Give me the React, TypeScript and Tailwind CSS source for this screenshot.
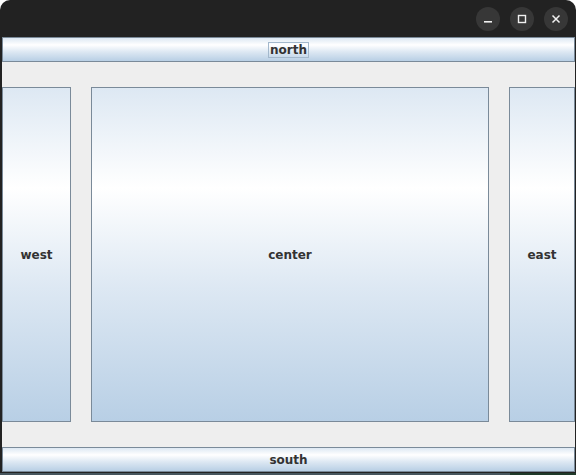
import React from "react";

// Metal "ocean" gradient used by Swing buttons
const grad =
  "bg-[linear-gradient(to_bottom,#dde8f3_0%,#ffffff_30%,#dde8f3_60%,#b8cfe5_100%)]";

function Btn({ label, focus, className }: { label: string; focus?: boolean; className?: string }) {
  return (
    <div
      className={`flex items-center justify-center border border-[#7a8a99] ${grad} text-[12px] font-bold text-[#333333] ${className ?? ""}`}
      style={{ fontFamily: '"DejaVu Sans", sans-serif' }}
    >
      <span className={focus ? "border border-[#a3b8cc] px-px leading-[14px]" : "leading-[14px]"}>{label}</span>
    </div>
  );
}

function TitleButton({ children }: { children: React.ReactNode }) {
  return (
    <div className="flex h-[24px] w-[24px] items-center justify-center rounded-full bg-[#373737]">
      {children}
    </div>
  );
}

export default function App() {
  return (
    <div className="flex h-[475px] w-[576px] flex-col bg-white">
      <div className="flex h-[473px] shrink-0 flex-col overflow-hidden rounded-t-[10px] bg-[#222222]">
        {/* title bar */}
        <div className="flex h-[37px] shrink-0 items-center justify-end gap-[10px] pr-[8px]">
          <TitleButton>
            <svg width="10" height="10" viewBox="0 0 10 10">
              <rect x="1" y="7" width="8" height="1.6" fill="#f0f0f0" />
            </svg>
          </TitleButton>
          <TitleButton>
            <svg width="10" height="10" viewBox="0 0 10 10">
              <rect x="1.5" y="1.5" width="7" height="7" fill="none" stroke="#f0f0f0" strokeWidth="1.4" />
            </svg>
          </TitleButton>
          <TitleButton>
            <svg width="10" height="10" viewBox="0 0 10 10">
              <path d="M1.5 1.5 L8.5 8.5 M8.5 1.5 L1.5 8.5" stroke="#f0f0f0" strokeWidth="1.5" />
            </svg>
          </TitleButton>
        </div>

        {/* content pane, BorderLayout */}
        <div className="ml-[2px] mr-[1px] flex h-[435px] shrink-0 flex-col bg-[#eeeeee]">
          <Btn label="north" focus className="h-[25px] shrink-0" />
          <div className="mt-[25px] flex h-[335px] shrink-0 gap-[20px]">
            <Btn label="west" className="w-[69px] shrink-0" />
            <Btn label="center" className="flex-1" />
            <Btn label="east" className="w-[66px] shrink-0" />
          </div>
          <Btn label="south" className="mt-[25px] h-[25px] shrink-0" />
        </div>
      </div>
      {/* desktop below the window */}
      <div className="flex h-[2px] bg-[#46565e]">
        <div className="flex-1" />
        <div className="w-[66px] bg-[#1f3a2a]" />
      </div>
    </div>
  );
}
